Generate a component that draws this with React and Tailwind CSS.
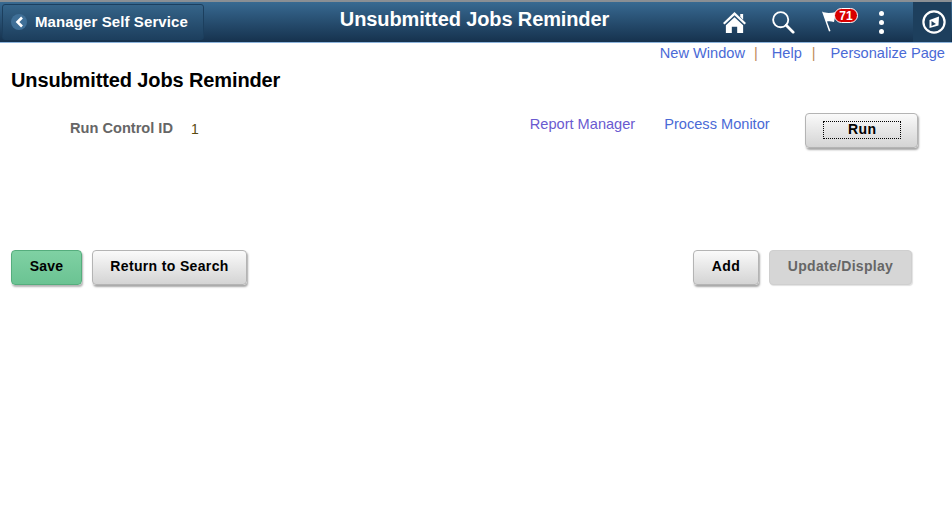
import React from 'react';

const btn = 'h-[35px] rounded-[4px] border border-[#b4b4b4] bg-gradient-to-b from-[#fafafa] to-[#d4d4d4] pb-[2px] shadow-[1px_2px_2px_rgba(0,0,0,0.35)] text-[14px] font-bold text-black tracking-[0.35px]';

const HomeIcon = () => (
  <svg width="25" height="23" viewBox="0 0 26 24" fill="white">
    <path d="M13 1 L25 12.5 L23.4 14 L13 4.4 L2.6 14 L1 12.5 Z" />
    <path d="M19 3 h3 v6 l-3 -3 Z" />
    <path d="M13 6.5 L22 14.8 V23 H15.8 V16.5 H10.2 V23 H4 V14.8 Z" />
  </svg>
);

const SearchIcon = () => (
  <svg width="24" height="24" viewBox="0 0 26 26" fill="none" stroke="white">
    <circle cx="10.5" cy="10.5" r="8.2" strokeWidth="2" />
    <path d="M16.5 16.5 L24 24" strokeWidth="3" strokeLinecap="round" />
  </svg>
);

const FlagIcon = () => (
  <svg width="20" height="22" viewBox="0 0 20 22" fill="white">
    <path d="M1 0.5 C5 2.5 10 2 15 1 L13 11 C10 10 8 10 6 10.5 L9.5 20 L8 20.5 Z" />
  </svg>
);

const CompassIcon = () => (
  <svg width="24" height="24" viewBox="0 0 24 24" fill="none">
    <circle cx="12" cy="12" r="10.6" stroke="white" strokeWidth="2.2" />
    <path d="M17 6.5 L16.5 15.5 L7.5 18 L7.5 10 Z" fill="white" />
    <path d="M9.5 11 L14 14 L9.5 16 Z" fill="#1d3f5d" />
  </svg>
);

const App = () => {
  return (
    <div className="min-h-[523px] bg-white font-['Liberation_Sans',Arial,sans-serif]">
      <header className="flex h-[43px] items-stretch border-t-2 border-b border-t-[#8a8f94] border-b-[#8db4dc] bg-gradient-to-b from-[#386a92] to-[#16324e]">
        <div className="w-[320px] pl-[2px] pt-[2px]">
          <button className="flex h-[36px] w-[202px] items-center rounded-[3px] border border-[#1c3f5e] bg-gradient-to-b from-[#356489] to-[#1d3f5e] pl-[8px] text-[15px] font-bold tracking-[0.1px] text-white">
            <span className="mr-[8px] flex h-[16px] w-[16px] items-center justify-center rounded-full bg-[#3f6f97]">
              <svg width="9" height="12" viewBox="0 0 9 12" fill="none" stroke="white" strokeWidth="2.6">
                <path d="M7 1.5 L2.5 6 L7 10.5" />
              </svg>
            </span>
            Manager Self Service
          </button>
        </div>
        <div className="w-[309px] pt-[5px] text-center text-[20px] font-bold leading-[24px] tracking-[-0.12px] text-white">
          Unsubmitted Jobs Reminder
        </div>
        <div className="flex flex-1 items-start">
          <div className="ml-[93px] mt-[9px]"><HomeIcon /></div>
          <div className="ml-[24px] mt-[8px]"><SearchIcon /></div>
          <div className="relative ml-[26px] mt-[9px]">
            <FlagIcon />
            <span className="absolute left-[13px] top-[-3px] flex h-[15px] w-[24px] items-center justify-center rounded-full border-[1.5px] border-white bg-[#d90000] text-[12px] font-bold leading-none text-white">71</span>
          </div>
          <div className="ml-[38px] mt-[9px] flex flex-col gap-[4px]">
            <span className="h-[5px] w-[5px] rounded-full bg-white" />
            <span className="h-[5px] w-[5px] rounded-full bg-white" />
            <span className="h-[5px] w-[5px] rounded-full bg-white" />
          </div>
          <div className="ml-[29px] flex h-full w-[38px] items-center justify-center bg-[#1d3f5d] pl-[3px]">
            <CompassIcon />
          </div>
        </div>
      </header>

      <nav className="mt-[1px] flex h-[18px] justify-end pr-[7px] text-[14.6px] leading-[18px] text-[#4a6ad6]">
        <a>New Window</a>
        <span className="ml-[9px] text-[#c08a5a]">|</span>
        <a className="ml-[14px]">Help</a>
        <span className="ml-[10px] text-[#c08a5a]">|</span>
        <a className="ml-[15px]">Personalize Page</a>
      </nav>

      <h1 className="mt-[6px] pl-[11px] text-[20px] font-bold leading-[24px] tracking-[-0.12px] text-black">Unsubmitted Jobs Reminder</h1>

      <div className="mt-[21px] flex h-[38px] items-start">
        <span className="ml-[70px] mt-[7px] text-[14.6px] font-bold leading-[16px] text-[#666666]">Run Control ID</span>
        <span className="ml-[18px] mt-[8px] text-[14px] leading-[16px] text-[#5a4a10]">1</span>
        <a className="ml-[331px] mt-[2px] text-[14.6px] leading-[18px] text-[#6a5ad0]">Report Manager</a>
        <a className="ml-[29px] mt-[2px] text-[14.6px] leading-[18px] text-[#4a6ad6]">Process Monitor</a>
        <button className={`${btn} ml-[35px] flex w-[113px] items-center justify-center pl-[2px]`}>
          <span className="flex h-[18px] w-[78px] items-center justify-center border border-dotted border-black">Run</span>
        </button>
      </div>

      <div className="mt-[99px] flex px-[11px]">
        <button className="h-[35px] w-[71px] rounded-[4px] border border-[#55ad7d] bg-gradient-to-b from-[#7fd1a3] to-[#6bc393] pb-[2px] text-[14px] font-bold tracking-[0.2px] text-black shadow-[1px_2px_2px_rgba(0,0,0,0.3)]">Save</button>
        <button className={`${btn} ml-[10px] w-[155px]`}>Return to Search</button>
        <button className={`${btn} ml-auto w-[66px]`}>Add</button>
        <button className="ml-[10px] mr-[29px] h-[35px] w-[143px] rounded-[4px] border border-[#cfcfcf] bg-[#d6d6d6] pb-[2px] text-[14px] font-bold tracking-[0.3px] text-[#666666] shadow-[1px_1px_1px_rgba(0,0,0,0.12)]">Update/Display</button>
      </div>
    </div>
  );
};

export default App;
